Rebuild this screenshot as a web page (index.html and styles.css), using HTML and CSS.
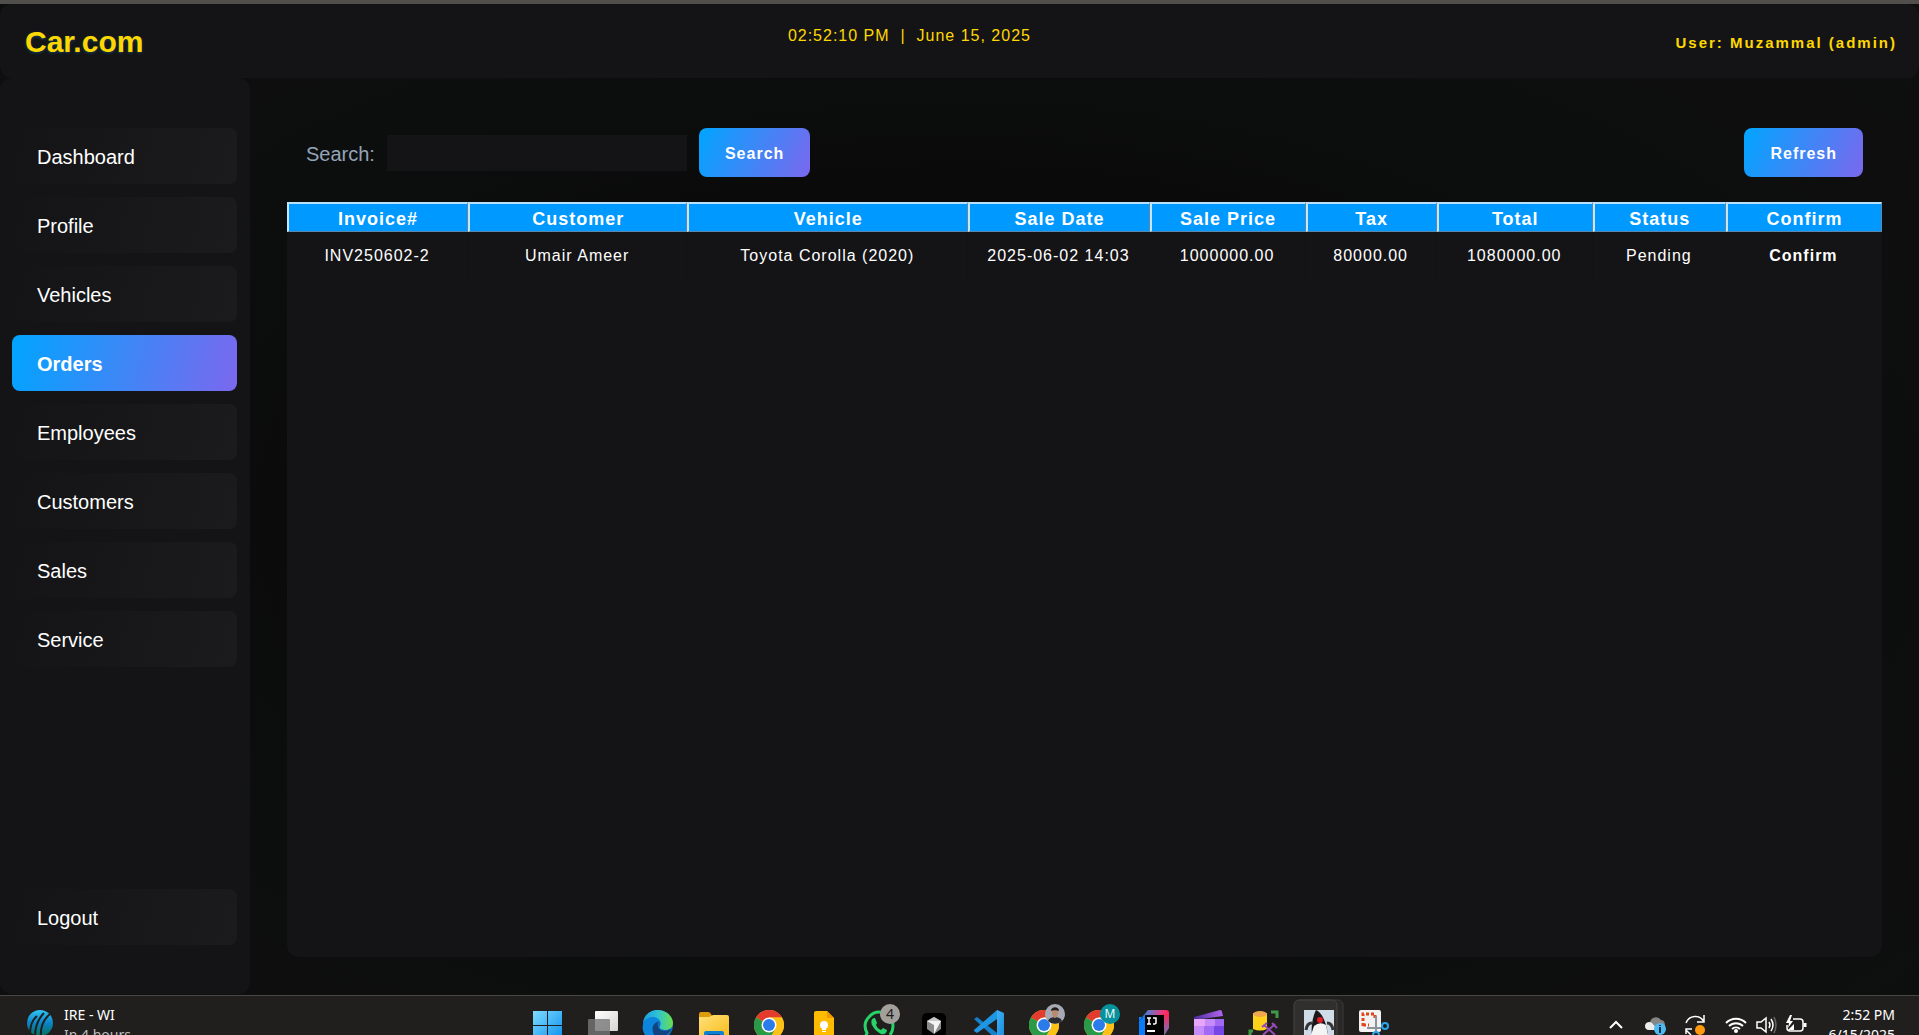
FILE: index.html
```html
<!DOCTYPE html>
<html lang="en">
<head>
<meta charset="utf-8">
<title>Car.com - Orders</title>
<link rel="stylesheet" href="styles.css">
</head>
<body>
<svg class="defs" aria-hidden="true">
  <defs>
    <linearGradient id="win" x1="0" y1="0" x2="1" y2="1"><stop offset="0" stop-color="#7fdcff"/><stop offset="1" stop-color="#0a8fee"/></linearGradient>
    <linearGradient id="pane" x1="0" y1="0" x2="1" y2="1"><stop offset="0" stop-color="#fff"/><stop offset="1" stop-color="#d4d4d4"/></linearGradient>
    <linearGradient id="edgeTop" x1="0" y1="0" x2="1" y2="0"><stop offset="0" stop-color="#1b9de2"/><stop offset=".5" stop-color="#2fc3d2"/><stop offset="1" stop-color="#6be04a"/></linearGradient>
    <linearGradient id="folder" x1="0" y1="0" x2="1" y2="1"><stop offset="0" stop-color="#ffe07a"/><stop offset="1" stop-color="#f9bd1c"/></linearGradient>
    <linearGradient id="ij" x1="0" y1="0" x2="1" y2="0"><stop offset="0" stop-color="#0a84ff"/><stop offset=".4" stop-color="#7a6bb8"/><stop offset=".8" stop-color="#f0357a"/><stop offset="1" stop-color="#ff2456"/></linearGradient>
    <linearGradient id="ijSide" x1="0" y1="0" x2="0" y2="1"><stop offset="0" stop-color="#ff2456"/><stop offset=".6" stop-color="#a05a9a"/><stop offset="1" stop-color="#6a6a9a"/></linearGradient>
    <linearGradient id="clap" x1="0" y1="0" x2="1" y2="0"><stop offset="0" stop-color="#4a2d9c"/><stop offset="1" stop-color="#b565f0"/></linearGradient>
    <linearGradient id="globe" x1="0" y1="0" x2="0" y2="1"><stop offset="0" stop-color="#2fc5f5"/><stop offset=".5" stop-color="#0b84c6"/><stop offset="1" stop-color="#06705c"/></linearGradient>
    <linearGradient id="code" x1="0" y1="0" x2="1" y2="1"><stop offset="0" stop-color="#3fb2f5"/><stop offset="1" stop-color="#1b8ee0"/></linearGradient>
    <symbol id="chrome" viewBox="0 0 30 30">
      <circle cx="15" cy="15" r="15" fill="#fbc116"/>
      <path d="M15 15 2 7.500A15 15 0 0 1 28 7.500H15z" fill="#e33b2e"/>
      <path d="M2 7.500A15 15 0 0 0 15 30l6.500-11.200L15 15z" fill="#2a9a48"/>
      <path d="M15 7.500h13A15 15 0 0 1 15 30l6.500-11.200z" fill="#fbc116"/>
      <circle cx="15" cy="15" r="7.500" fill="#fff"/><circle cx="15" cy="15" r="6" fill="#2b7bea"/>
    </symbol>
  </defs>
</svg>

<header class="topbar">
  <h1 class="brand">Car.com</h1>
  <p class="clock">02:52:10 PM&nbsp; |&nbsp; June 15, 2025</p>
  <p class="user">User: Muzammal (admin)</p>
</header>

<div class="workspace">
  <nav class="sidebar" aria-label="Main">
    <button type="button" class="nav-item">Dashboard</button>
    <button type="button" class="nav-item">Profile</button>
    <button type="button" class="nav-item">Vehicles</button>
    <button type="button" class="nav-item active" aria-current="page">Orders</button>
    <button type="button" class="nav-item">Employees</button>
    <button type="button" class="nav-item">Customers</button>
    <button type="button" class="nav-item">Sales</button>
    <button type="button" class="nav-item">Service</button>
    <button type="button" class="nav-item logout">Logout</button>
  </nav>

  <main class="content">
    <form class="toolbar" onsubmit="return false">
      <label class="search-label" for="search">Search:</label>
      <input class="search-input" id="search" type="text">
      <button type="submit" class="action">Search</button>
      <button type="button" class="action refresh">Refresh</button>
    </form>
    <section class="panel">
      <table class="orders">
        <colgroup>
          <col class="c-invoice"><col class="c-customer"><col class="c-vehicle"><col class="c-date"><col class="c-price"><col class="c-tax"><col class="c-total"><col class="c-status"><col class="c-confirm">
        </colgroup>
        <thead>
          <tr><th>Invoice#</th><th>Customer</th><th>Vehicle</th><th>Sale Date</th><th>Sale Price</th><th>Tax</th><th>Total</th><th>Status</th><th>Confirm</th></tr>
        </thead>
        <tbody>
          <tr><td>INV250602-2</td><td>Umair Ameer</td><td>Toyota Corolla (2020)</td><td>2025-06-02 14:03</td><td>1000000.00</td><td>80000.00</td><td>1080000.00</td><td>Pending</td><td><button type="button" class="confirm">Confirm</button></td></tr>
        </tbody>
      </table>
    </section>
  </main>
</div>

<footer class="taskbar">
  <button type="button" class="widget">
    <svg class="widget-icon" width="28" height="28" viewBox="0 0 28 28" aria-hidden="true">
      <circle cx="14" cy="14" r="13" fill="url(#globe)"/>
      <path d="M4 25C4 16 6 11 11 7M9 28C9 18 11 11 18 4M15 28C14 18 17 11 24 5" fill="none" stroke="#201f1e" stroke-width="2"/>
    </svg>
    <span class="two-line"><span>IRE - WI</span><span class="dim">In 4 hours</span></span>
  </button>

  <div class="apps">
    <button type="button" class="app" aria-label="Start"><svg viewBox="0 0 55 39"><path d="M13 15h14v14H13zM28 15h14v14H28zM13 30h14v14H13zM28 30h14v14H28z" fill="url(#win)"/></svg></button>
    <button type="button" class="app" aria-label="Task view"><svg viewBox="0 0 55 39"><rect x="20" y="15" width="23" height="20" rx="1" fill="url(#pane)"/><rect x="13" y="23" width="22" height="19" rx="1" fill="#777" opacity=".8"/></svg></button>
    <button type="button" class="app" aria-label="Edge"><svg viewBox="0 0 55 39"><circle cx="28" cy="29" r="15" fill="#0c6fc4"/><path d="M13 27C14 18 21 14 28 14c9 0 15 7 15 13 0 5-4 7-8 7-5 0-6-2-5-4 2-4-1-8-6-8-6 0-10 3-11 5z" fill="url(#edgeTop)"/><path d="M13 28c1-5 6-7 10-7 3 0 6 2 6 4-5 1-7 7-4 14H15c-2-3-3-7-2-11z" fill="#0b86dc"/><path d="M24 39c-3-7-1-12 4-13-1 4 0 8 6 9 3 0 5-1 7-2-1 3-3 5-5 6z" fill="#12427f"/></svg></button>
    <button type="button" class="app" aria-label="File Explorer"><svg viewBox="0 0 55 39"><path d="M14 18q0-2 2-2h7q2 0 3 2l1 2h10v6H14z" fill="#dd9c08"/><path d="M14 21h10l4-2h14q2 0 2 2v20H14z" fill="url(#folder)"/><rect x="19" y="35" width="20" height="8" rx="2" fill="#0f7fd4"/><path d="M23 39h12" stroke="#0a4e8c" stroke-width="2"/></svg></button>
    <button type="button" class="app" aria-label="Chrome"><svg viewBox="0 0 55 39"><use href="#chrome" x="14" y="14" width="30" height="30"/></svg></button>
    <button type="button" class="app" aria-label="Keep"><svg viewBox="0 0 55 39"><path d="M19 17q0-2 2-2h11l7 7v20H19z" fill="#ffbb00"/><path d="M32 15l7 7h-7z" fill="#f29900"/><circle cx="29" cy="29" r="4" fill="#fff"/><path d="M27 31h4v3h-4zM27 35h4v1h-4z" fill="#fff"/></svg></button>
    <button type="button" class="app" aria-label="WhatsApp"><svg viewBox="0 0 55 39"><path d="M15 42l2-5c-3-6-2-12 2-16 6-7 16-6 21 0 4 5 4 13 0 18" fill="none" stroke="#25d366" stroke-width="3"/><path d="M24 22c-3 1-3 4-2 7 2 4 5 7 9 9 3 1 6-1 6-4l-4-2-2 2c-3-1-4-3-5-5l1-2-2-5z" fill="#25d366"/><circle cx="40" cy="18" r="10" fill="#a3a09c"/><text x="40" y="23" class="badge-text dark">4</text></svg></button>
    <button type="button" class="app" aria-label="Cursor"><svg viewBox="0 0 55 39"><rect x="17" y="17" width="24" height="25" rx="5" fill="#000"/><path d="M29 21l7 4v8l-7 5-7-5v-8z" fill="#8c8c8c"/><path d="M22 25h14l-7 13v-9z" fill="#f4f4f4"/><path d="M29 21l7 4H22z" fill="#c9c9c9"/></svg></button>
    <button type="button" class="app" aria-label="Visual Studio Code"><svg viewBox="0 0 55 39"><path d="M37 14l7 3v22h-7z" fill="url(#code)"/><path d="M14 23l3-2 20 16v7z" fill="#1581cc"/><path d="M14 35l3 2 20-14v-9L14 34z" fill="#1e96e3"/></svg></button>
    <button type="button" class="app" aria-label="Chrome, first profile"><svg viewBox="0 0 55 39"><use href="#chrome" x="14" y="14" width="30" height="30"/><circle cx="40" cy="18" r="10" fill="#a6a9b4"/><path d="M33 25c1-3 4-4 7-4s6 1 7 4a10 10 0 0 1-14 0z" fill="#282b30"/><path d="M37 14h6v4q-1 4-3 4t-3-4z" fill="#b98a70"/><path d="M36 15c0-5 8-5 8 0-2-1-6-1-8 0z" fill="#231e1d"/></svg></button>
    <button type="button" class="app" aria-label="Chrome, second profile"><svg viewBox="0 0 55 39"><use href="#chrome" x="14" y="14" width="30" height="30"/><circle cx="40" cy="18" r="10" fill="#06919c"/><text x="40" y="22" class="badge-text light">M</text></svg></button>
    <button type="button" class="app" aria-label="IntelliJ IDEA"><svg viewBox="0 0 55 39"><path d="M14 25l9-11h18q3 0 3 3v4H14z" fill="url(#ij)"/><path d="M37 18h7v14l-5 8h-2z" fill="url(#ijSide)"/><path d="M14 25l6-6v21h-6z" fill="#087cfa"/><path d="M20 19h19v20H20z" fill="#000"/><path d="M22 22h4M24 22v6M22 28h4M28 22h3v5q0 1-3 1" fill="none" stroke="#fff" stroke-width="1.500"/><path d="M22 35h8" stroke="#fff" stroke-width="2"/></svg></button>
    <button type="button" class="app" aria-label="Clipchamp"><svg viewBox="0 0 55 39"><path d="M14 21l26-7q2 0 2 2l1 4-29 4z" fill="url(#clap)"/><path d="M14 23h30v18H14z" fill="#a06af5"/><path d="M14 23h11v7H14z" fill="#e7a5fb"/><path d="M25 23h10v7H25zM14 30h10v9H14z" fill="#c58bf8"/><path d="M34 30h10v9H34z" fill="#7646e6"/></svg></button>
    <button type="button" class="app" aria-label="Database tools"><svg viewBox="0 0 55 39"><path d="M18 17h14v16q-7 3-14 0z" fill="#ffd21c"/><ellipse cx="25" cy="18" rx="7" ry="3" fill="#f0a84e"/><path d="M36 16h6v6M15 39v-4h3" fill="none" stroke="#3e9a45" stroke-width="3"/><path d="M28 39l12-11M29 29l11 10M27 31l5-4M37 27l5 5" stroke="#984bb8" stroke-width="2"/></svg></button>
    <button type="button" class="app" aria-label="Java application"><svg viewBox="0 0 55 39"><rect x="6" y="4" width="47" height="46" rx="5" fill="#292827" stroke="#3a3938"/><rect x="4" y="4" width="43" height="46" rx="5" fill="#302f2e" stroke="#454443"/><rect x="14" y="14" width="30" height="30" fill="#cfdbe6"/><path d="M26 14c5 2 10 10 12 25H22c-1-6 0-17 4-25z" fill="#191919"/><path d="M24 30q6-5 12-1l2 10H21z" fill="#f4f4f4"/><path d="M22 27q-5 0-6 7M37 27q5 0 6 7" fill="none" stroke="#333" stroke-width="3"/><circle cx="30" cy="24" r="3" fill="#e51c23"/></svg></button>
    <button type="button" class="app" aria-label="Snipping Tool"><svg viewBox="0 0 55 39"><rect x="14" y="14" width="22" height="22" rx="2" fill="#f2f2f2"/><path d="M18 30V18h12v5" fill="none" stroke="#e2451c" stroke-width="3" stroke-dasharray="3 2"/><path d="M18 29h6" stroke="#e2451c" stroke-width="3" stroke-dasharray="3 2"/><path d="M31 20v17M22 32h14" stroke="#8b949d" stroke-width="2"/><circle cx="40" cy="30" r="3" fill="none" stroke="#2aa7ec" stroke-width="2"/><circle cx="31" cy="39" r="3" fill="none" stroke="#2aa7ec" stroke-width="2"/></svg></button>
  </div>

  <div class="tray">
    <button type="button" class="tray-item" aria-label="Show hidden icons"><svg viewBox="0 0 40 39"><path d="M14 32l6-6 6 6" fill="none" stroke="#fff" stroke-width="2"/></svg></button>
    <button type="button" class="tray-item" aria-label="OneDrive"><svg viewBox="0 0 40 39"><path d="M14 27a6 6 0 0 1 11-3c3 0 4 3 4 5v5H16z" fill="#858585"/><path d="M9 30c0-4 5-5 7-3l6 7h-9c-3 0-4-2-4-4z" fill="#ececec"/><circle cx="24" cy="33" r="6" fill="#4fb9f2"/><path d="M24 31v6M24 29v1" stroke="#12324a" stroke-width="2"/></svg></button>
    <button type="button" class="tray-item" aria-label="Updates"><svg viewBox="0 0 40 39"><path d="M10 27c3-8 14-9 18-1M28 19v7h-7M10 38v-5h6M10 34l5 5" fill="none" stroke="#fff" stroke-width="1.500"/><circle cx="24" cy="34" r="5" fill="#ff9a0c"/></svg></button>
    <button type="button" class="tray-group" aria-label="Network, volume, battery">
      <svg viewBox="0 0 100 39">
        <path d="M10 27a14 14 0 0 1 20 0M13 30a10 10 0 0 1 14 0M16 33a6 6 0 0 1 8 0" fill="none" stroke="#fff" stroke-width="2"/><circle cx="20" cy="35" r="2" fill="#fff"/>
        <path d="M41 26h4l5-4v14l-5-4h-4z" fill="none" stroke="#fff" stroke-width="1.500"/><path d="M53 26q2 3 0 6M55 23q4 6 0 12" fill="none" stroke="#fff" stroke-width="1.500"/><path d="M58 21q4 8 0 16" fill="none" stroke="#666" stroke-width="1.500"/>
        <path d="M77 23h7q3 0 3 3v6q0 3-3 3H74q-3 0-3-3v-3" fill="none" stroke="#fff" stroke-width="1.500"/><path d="M89 27v4" stroke="#fff" stroke-width="3"/><path d="M74 19l-4 8h3l-1 5 5-7h-3l2-6z" fill="#fff"/><path d="M72 34h6v-6z" fill="#fff"/>
      </svg>
    </button>
    <button type="button" class="two-line system-clock"><span>2:52 PM</span><span>6/15/2025</span></button>
  </div>
</footer>
</body>
</html>
```
FILE: styles.css
```css
* {
  box-sizing: border-box;
}

body {
  margin: 0;
  height: 100vh;
  display: flex;
  flex-direction: column;
  overflow: hidden;
  border-top: 4px solid #504f4b;
  background: radial-gradient(ellipse at center, #080808 0%, #0a0a0a 45%, #0c0e0d 65%, #0e0e0e 85%, #0d0f0f 100%);
  color: #fff;
  font-family: "Liberation Sans", Arial, sans-serif;
}

button {
  margin: 0;
  padding: 0;
  border: 0;
  background: none;
  color: inherit;
  font: inherit;
  cursor: pointer;
}

.defs {
  position: absolute;
  width: 0;
  height: 0;
}

/* Header */
.topbar {
  flex: none;
  min-height: 74px;
  display: flex;
  align-items: center;
  justify-content: space-between;
  padding: 2px 22px 0 25px;
  border-radius: 12px;
  background: #141416;
  color: #ffd700;
}

.brand {
  margin: 0;
  font-size: 30px;
  line-height: 36px;
  text-shadow: 0 1px 3px rgba(0, 165, 255, .3);
}

.clock,
.user {
  margin: 0;
  line-height: 20px;
}

.clock {
  padding-bottom: 12px;
  font-size: 16px;
  letter-spacing: 1px;
}

.user {
  padding-top: 2px;
  font-size: 15px;
  font-weight: bold;
  letter-spacing: 2px;
}

/* Sidebar */
.workspace {
  flex: 1;
  min-height: 0;
  display: flex;
}

.sidebar {
  flex: none;
  width: 250px;
  display: flex;
  flex-direction: column;
  gap: 13px;
  padding: 50px 13px 49px 12px;
  border-radius: 12px;
  background: #141416;
}

.nav-item {
  height: 56px;
  padding: 2px 25px 0;
  border-radius: 8px;
  background: linear-gradient(104deg, #141416, #1b1b1d);
  font-size: 20px;
  text-align: left;
}

.nav-item.active {
  background: linear-gradient(104deg, #00a5ff, #7b68ee);
  font-weight: bold;
}

.logout {
  margin-top: auto;
}

/* Content */
.content {
  flex: 1;
  min-width: 0;
  display: flex;
  flex-direction: column;
  gap: 25px;
  padding: 50px 37px;
}

.toolbar {
  display: flex;
  align-items: center;
  gap: 12px;
  padding: 0 19px;
}

.search-label {
  padding-top: 2px;
  color: #94a3b8;
  font-size: 20px;
  line-height: 24px;
}

.search-input {
  width: 300px;
  height: 36px;
  padding: 0 10px;
  border: 0;
  background: #141416;
  color: #fff;
  font: 16px "Liberation Sans", Arial, sans-serif;
}

.action {
  height: 49px;
  padding: 2px 26px 0;
  border-radius: 8px;
  background: linear-gradient(114deg, #00a5ff, #7b68ee);
  font-size: 16px;
  font-weight: bold;
  letter-spacing: 1px;
}

.refresh {
  margin-left: auto;
}

.content {
  padding-bottom: 37px;
}

.panel {
  flex: 1;
  min-height: 0;
  overflow: hidden;
  border-radius: 0 0 12px 12px;
  background: #141416;
}

.orders {
  width: 100%;
  table-layout: fixed;
  border-collapse: separate;
  border-spacing: 0;
  text-align: center;
  letter-spacing: 1px;
}

.c-invoice,
.c-date {
  width: 181px;
}

.c-customer {
  width: 219px;
}

.c-vehicle {
  width: 281px;
}

.c-price,
.c-total,
.c-confirm {
  width: 156px;
}

.c-tax {
  width: 131px;
}

.c-status {
  width: 133px;
}

th {
  height: 30px;
  padding: 3px 0 0;
  border: 1px solid #5d87ab;
  border-top: 2px solid #b8e0fc;
  border-left: 2px solid #c8e6fb;
  background: #0099ff;
  font-size: 18px;
  line-height: 20px;
}

td {
  height: 48px;
  padding: 0;
  border-right: 1px solid #121214;
  font-size: 16px;
}

.confirm {
  font-weight: bold;
  letter-spacing: 1px;
}

/* Taskbar */
.taskbar {
  flex: none;
  height: 40px;
  margin-top: 1px;
  display: grid;
  grid-template-columns: 1fr auto 1fr;
  align-items: start;
  overflow: hidden;
  border-top: 1px solid #484746;
  background: #201f1e;
  font-family: "Noto Sans", "Open Sans", sans-serif;
  font-size: 14px;
  line-height: 20px;
}

.widget {
  display: flex;
  align-items: flex-start;
  gap: 10px;
  padding: 9px 0 0 26px;
  text-align: left;
}

.widget-icon {
  margin-top: 4px;
}

.two-line {
  display: flex;
  flex-direction: column;
}

.dim {
  color: #bdbdbd;
}

.apps {
  display: flex;
}

.app,
.tray-item,
.tray-group {
  height: 39px;
}

.app {
  width: 55px;
}

.app svg,
.tray svg {
  display: block;
  width: 100%;
  height: 39px;
}

.badge-text {
  font-family: "Noto Sans", sans-serif;
  text-anchor: middle;
}

.badge-text.dark {
  fill: #1b1b1b;
  font-size: 14px;
}

.badge-text.light {
  fill: #e8fafa;
  font-size: 12px;
}

.tray {
  display: flex;
  justify-content: flex-end;
  padding-right: 24px;
}

.tray-item {
  width: 40px;
}

.tray-group {
  width: 100px;
}

.system-clock {
  width: 79px;
  align-items: flex-end;
  padding-top: 9px;
}
```
